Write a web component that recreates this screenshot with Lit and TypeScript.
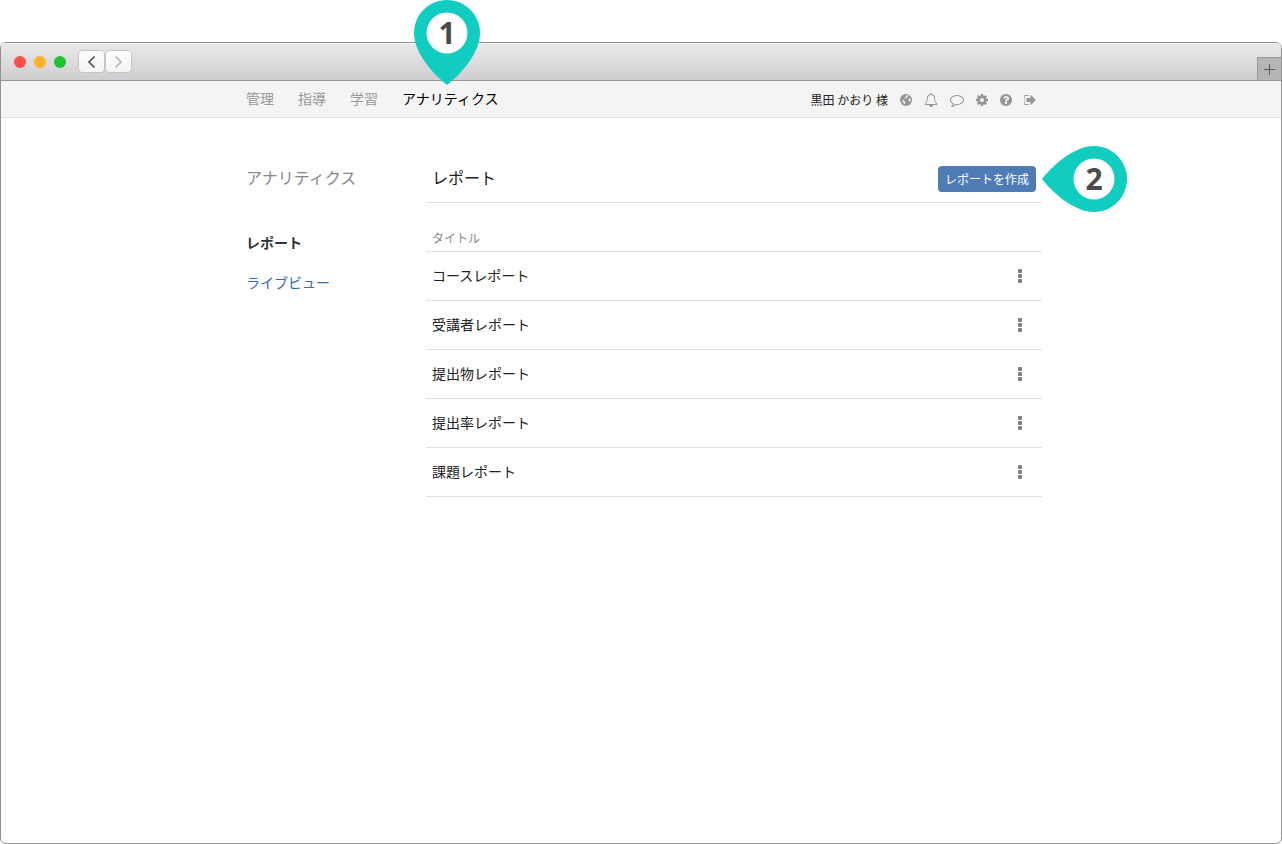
import { LitElement, html, css, svg } from "lit";
import { customElement, property } from "lit/decorators.js";

const BELL =
  "M912 1696q0-16-16-16-59 0-101.5-42.5t-42.5-101.5q0-16-16-16t-16 16q0 73 51.5 124.5t124.5 51.5q16 0 16-16zm-666-288h1300q-266-300-266-832 0-51-24-105t-69-103-121.5-80.5-169.5-31.5-169.5 31.5-121.5 80.5-69 103-24 105q0 532-266 832zm1482 0q0 52-38 90t-90 38h-448q0 106-75 181t-181 75-181-75-75-181h-448q-52 0-90-38t-38-90q50-42 91-88t85-119.5 74.5-158.5 50-206 19.5-260q0-152 117-282.5t307-158.5q-8-19-8-39 0-40 28-68t68-28 68 28 28 68q0 20-8 39 190 28 307 158.5t117 282.5q0 139 19.5 260t50 206 74.5 158.5 85 119.5 91 88z";
const COMMENT =
  "M896 384q-204 0-381.5 69.5t-282 187.5-104.5 255q0 112 71.5 213.5t201.5 175.5l87 50-27 96q-24 91-70 172 152-63 275-171l43-38 57 6q69 8 130 8 204 0 381.5-69.5t282-187.5 104.5-255-104.5-255-282-187.5-381.5-69.5zm896 512q0 174-120 321.5t-326 233-450 85.5q-70 0-145-8-198 175-460 242-49 14-114 22h-5q-15 0-27-10.5t-16-27.5v-1q-3-4-.5-12t2-10 4.5-9.5l6-9 7-8.5 8-9q7-8 31-34.5t34.5-38 31-39.5 32.5-51 27-59 26-76q-157-89-247.5-220t-90.5-281q0-174 120-321.5t326-233 450-85.5 450 85.5 326 233 120 321.5z";
const COG =
  "M1152 896q0-106-75-181t-181-75-181 75-75 181 75 181 181 75 181-75 75-181zm512-109v222q0 12-8 23t-20 13l-185 28q-19 54-39 91 35 50 107 138 10 12 10 25t-9 23q-27 37-99 108t-94 71q-12 0-26-9l-138-108q-44 23-91 38-16 136-29 186-7 28-36 28h-222q-14 0-24.5-8.5t-11.5-21.5l-28-184q-49-16-90-37l-141 107q-10 9-25 9-14 0-25-11-126-114-165-168-7-10-7-23 0-12 8-23 15-21 51-66.5t54-70.5q-27-50-41-99l-183-27q-13-2-21-12.5t-8-23.5v-222q0-12 8-23t19-13l186-28q14-46 39-92-40-57-107-138-10-12-10-24 0-10 9-23 26-36 98.5-107.5t94.5-71.5q13 0 26 10l138 107q44-23 91-38 16-136 29-186 7-28 36-28h222q14 0 24.5 8.5t11.5 21.5l28 184q49 16 90 37l142-107q9-9 24-9 13 0 25 10 129 119 165 170 7 8 7 22 0 12-8 23-15 21-51 66.5t-54 70.5q26 50 41 98l183 28q13 2 21 12.5t8 23.5z";
const HELP =
  "M1024 1376v-192q0-14-9-23t-23-9h-192q-14 0-23 9t-9 23v192q0 14 9 23t23 9h192q14 0 23-9t9-23zm256-672q0-88-55.5-163t-138.5-116-170-41q-243 0-371 213-15 24 8 42l132 100q7 6 19 6 16 0 25-12 53-68 86-92 34-24 86-24 48 0 85.5 26t37.5 59q0 38-20 61t-68 45q-63 28-115.5 86.5t-52.5 125.5v36q0 14 9 23t23 9h192q14 0 23-9t9-23q0-19 21.5-49.5t54.5-49.5q32-18 49-28.5t46-35 44.5-48 28-60.5 12.5-81zm384 192q0 209-103 385.5t-279.5 279.5-385.5 103-385.5-103-279.5-279.5-103-385.5 103-385.5 279.5-279.5 385.5-103 385.5 103 279.5 279.5 103 385.5z";
const SIGN_OUT =
  "M704 1440q0 4 1 20t.5 26.5-3 23.5-10 19.5-20.5 6.5h-320q-119 0-203.5-84.5t-84.5-203.5v-704q0-119 84.5-203.5t203.5-84.5h320q13 0 22.5 9.5t9.5 22.5q0 4 1 20t.5 26.5-3 23.5-10 19.5-20.5 6.5h-320q-66 0-113 47t-47 113v704q0 66 47 113t113 47h312l11.5 1 11.5 3 8 5.5 7 9 2 13.5zm928-544q0 26-19 45l-544 544q-19 19-45 19t-45-19-19-45v-288h-448q-26 0-45-19t-19-45v-384q0-26 19-45t45-19h448v-288q0-26 19-45t45-19 45 19l544 544q19 19 19 45z";

const globe = svg`
  <circle cx="896" cy="896" r="768"></circle>
  <path fill="#f4f4f4" d="M960 300L1120 250L1260 340L1180 440L1040 500L960 620L840 700L740 740L700 660L760 540L900 460Z"></path>
  <path fill="#f4f4f4" d="M400 860L520 880L640 1000L780 1080L840 1180L760 1300L700 1440L600 1380L560 1200L440 1060Z"></path>
  <path fill="#f4f4f4" d="M1200 760L1360 700L1480 800L1500 960L1400 1140L1320 1120L1300 980L1180 900Z"></path>`;

const actions = [
  { label: "言語", wide: false, shape: globe },
  { label: "お知らせ", wide: true, shape: svg`<path d=${BELL}></path>` },
  { label: "メッセージ", wide: true, shape: svg`<path d=${COMMENT}></path>` },
  { label: "設定", wide: false, shape: svg`<path d=${COG}></path>` },
  { label: "ヘルプ", wide: false, shape: svg`<path d=${HELP}></path>` },
  { label: "ログアウト", wide: false, shape: svg`<path d=${SIGN_OUT}></path>` },
];

const reports = [
  "コースレポート",
  "受講者レポート",
  "提出物レポート",
  "提出率レポート",
  "課題レポート",
];

@customElement("step-pin")
class StepPin extends LitElement {
  @property() step = "";
  @property({ reflect: true }) point = "down";

  static styles = css`
    :host {
      display: grid;
      width: 66px;
      height: 85px;
      pointer-events: none;
    }
    :host([point="left"]) {
      width: 85px;
      height: 66px;
    }
    svg,
    .step {
      grid-area: 1 / 1;
    }
    svg {
      width: 100%;
      height: 100%;
    }
    .step {
      width: 66px;
      height: 66px;
      justify-self: end;
      font: 700 30px/66px "Open Sans", sans-serif;
      text-align: center;
      color: #4a4a4a;
    }
  `;

  render() {
    const left = this.point === "left";
    return html`
      <svg viewBox=${left ? "0 0 85 66" : "0 0 66 85"} aria-hidden="true">
        <g transform=${left ? "matrix(0 1 -1 0 85 0)" : ""}>
          <path
            fill="#10cdc0"
            d="M33 0C51.2 0 66 14.8 66 33C66 49 53 69 33 85C13 69 0 49 0 33C0 14.8 14.8 0 33 0Z"
          ></path>
          <circle cx="33" cy="33" r="20.5" fill="#fff"></circle>
        </g>
      </svg>
      <span class="step">${this.step}</span>
    `;
  }
}

@customElement("app-root")
class AppRoot extends LitElement {
  static styles = css`
    :host {
      display: flex;
      flex-direction: column;
      box-sizing: border-box;
      min-height: 100vh;
      padding-top: 42px;
      background: #fff;
      color: #333;
      font: 14px/20px "Noto Sans CJK JP", sans-serif;
    }
    a {
      color: inherit;
      text-decoration: none;
    }
    button {
      margin: 0;
      padding: 0;
      border: 0;
      background: none;
      color: inherit;
      font: inherit;
      cursor: pointer;
    }
    svg {
      display: block;
    }
    .window {
      flex: 1;
      border: 1px solid #929292;
      border-radius: 6px;
      background: #fff;
    }
    .titlebar {
      display: flex;
      align-items: center;
      height: 37px;
      padding-left: 13px;
      border-bottom: 1px solid #989698;
      border-radius: 5px 5px 0 0;
      background: linear-gradient(#ebe9eb, #cfcdd0);
      box-shadow: inset 0 1px #f5f4f5;
    }
    .lights {
      display: flex;
      gap: 8px;
      margin-right: 13px;
    }
    .light {
      width: 12px;
      height: 12px;
      border-radius: 50%;
    }
    .close {
      background: #ff4f49;
    }
    .minimize {
      background: #feb226;
    }
    .zoom {
      background: #1fc231;
    }
    .arrows {
      display: flex;
      gap: 2px;
    }
    .arrow {
      display: grid;
      place-items: center;
      width: 25px;
      height: 21px;
      border-radius: 4px;
      background: linear-gradient(#fdfdfd, #f4f4f4);
      box-shadow: 0 0 1px 1px #c4c2c5;
    }
    .newtab {
      display: grid;
      place-items: center;
      align-self: flex-end;
      box-sizing: border-box;
      width: 24px;
      height: 23px;
      margin-left: auto;
      border: solid #989698;
      border-width: 1px 0 0 1px;
      background: #b6b4b7;
    }
    .header {
      border-bottom: 1px solid #e1e1e1;
      background: #f4f4f4;
    }
    .bar,
    .content {
      display: flex;
      box-sizing: border-box;
      max-width: 802px;
      margin: 0 auto;
    }
    .bar {
      align-items: center;
      justify-content: space-between;
      height: 36px;
      padding: 0 6px;
    }
    .nav,
    .account {
      display: flex;
      align-items: center;
    }
    .nav {
      gap: 24px;
      height: 34px;
      align-self: flex-start;
      color: #999;
    }
    .tab {
      position: relative;
      display: flex;
      align-items: center;
      height: 100%;
    }
    .current {
      color: #000;
    }
    .tab step-pin {
      position: absolute;
      left: 12px;
      bottom: 30px;
    }
    .account {
      gap: 12px;
      padding-top: 2px;
    }
    .user {
      font-size: 12px;
      color: #222;
    }
    .action {
      fill: #959595;
    }
    .content {
      padding-top: 48px;
    }
    .side {
      flex: 0 0 186px;
      box-sizing: border-box;
      padding-left: 6px;
    }
    .title {
      margin: 0;
      color: #222;
      font-size: 16px;
      font-weight: 400;
      line-height: 22px;
    }
    .side .title {
      color: #888;
    }
    .menu {
      display: grid;
      gap: 20px;
      margin-top: 44px;
      color: #3b69a8;
    }
    .selected {
      color: #333;
      font-weight: 700;
    }
    .main {
      flex: 1;
      min-width: 0;
    }
    .head {
      display: flex;
      justify-content: space-between;
      padding: 0 6px 10px;
      border-bottom: 1px solid #e2e2e2;
    }
    .create {
      position: relative;
      display: flex;
    }
    .create button {
      height: 26px;
      padding: 0 7px;
      border-radius: 4px;
      background: #4f7cb5;
      color: #fff;
      font-size: 12px;
      line-height: 24px;
    }
    .create step-pin {
      position: absolute;
      left: calc(100% + 6px);
      top: -20px;
    }
    .reports {
      width: 100%;
      border-collapse: separate;
      border-spacing: 0;
    }
    .reports th,
    .reports td {
      border-bottom: 1px solid #e2e2e2;
      text-align: left;
    }
    .reports th {
      padding: 25px 6px 3px;
      color: #888;
      font-size: 12px;
      font-weight: 400;
    }
    .reports td {
      padding: 13px 6px 15px;
      color: #222;
    }
    .reports .tools {
      width: 20px;
      padding: 14px 12px;
    }
    .more {
      display: grid;
      place-items: center;
      width: 20px;
      height: 20px;
      fill: #808080;
    }
  `;

  render() {
    return html`
      <div class="window">
        <div class="titlebar">
          <div class="lights">
            <span class="light close"></span>
            <span class="light minimize"></span>
            <span class="light zoom"></span>
          </div>
          <div class="arrows">
            <button class="arrow" aria-label="戻る">
              <svg width="9" height="14" viewBox="0 0 9 14" fill="none" stroke="#4c4c4c" stroke-width="1.6">
                <path d="M7.5 1.5L2 7l5.5 5.5"></path>
              </svg>
            </button>
            <button class="arrow" aria-label="進む">
              <svg width="9" height="14" viewBox="0 0 9 14" fill="none" stroke="#b4b4b4" stroke-width="1.6">
                <path d="M1.5 1.5L7 7l-5.5 5.5"></path>
              </svg>
            </button>
          </div>
          <button class="newtab" aria-label="新規タブ">
            <svg width="11" height="11" viewBox="0 0 11 11" stroke="#5c5a5c" stroke-width="1">
              <path d="M5.5 0v11M0 5.5h11"></path>
            </svg>
          </button>
        </div>

        <header class="header">
          <div class="bar">
            <nav class="nav">
              <a class="tab" href="#">管理</a>
              <a class="tab" href="#">指導</a>
              <a class="tab" href="#">学習</a>
              <a class="tab current" href="#">アナリティクス<step-pin step="1"></step-pin></a>
            </nav>
            <div class="account">
              <span class="user">黒田 かおり 様</span>
              ${actions.map(
                (a) => html`<button class="action" aria-label=${a.label}>
                  <svg width=${a.wide ? 14 : 12} height="14" viewBox=${a.wide ? "0 0 1792 1792" : "128 0 1536 1792"}>
                    ${a.shape}
                  </svg>
                </button>`
              )}
            </div>
          </div>
        </header>

        <div class="content">
          <aside class="side">
            <h2 class="title">アナリティクス</h2>
            <nav class="menu">
              <a class="selected" href="#">レポート</a>
              <a href="#">ライブビュー</a>
            </nav>
          </aside>
          <main class="main">
            <div class="head">
              <h1 class="title">レポート</h1>
              <div class="create">
                <button>レポートを作成</button>
                <step-pin step="2" point="left"></step-pin>
              </div>
            </div>
            <table class="reports">
              <thead>
                <tr>
                  <th colspan="2">タイトル</th>
                </tr>
              </thead>
              <tbody>
                ${reports.map(
                  (name) => html`<tr>
                    <td>${name}</td>
                    <td class="tools">
                      <button class="more" aria-label="${name}のメニュー">
                        <svg width="4" height="14" viewBox="0 0 4 14">
                          <rect width="4" height="4" rx="1"></rect>
                          <rect y="5" width="4" height="4" rx="1"></rect>
                          <rect y="10" width="4" height="4" rx="1"></rect>
                        </svg>
                      </button>
                    </td>
                  </tr>`
                )}
              </tbody>
            </table>
          </main>
        </div>
      </div>
    `;
  }
}
